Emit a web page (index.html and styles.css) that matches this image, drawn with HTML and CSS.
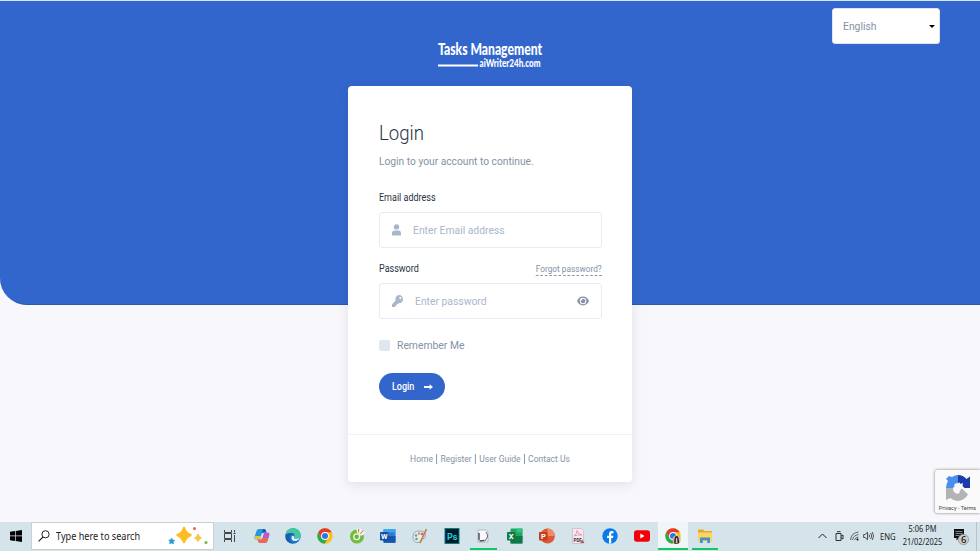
FILE: index.html
```
<!DOCTYPE html>
<html lang="en">
<head>
    <meta charset="UTF-8">
    <title>Login</title>
    <link rel="stylesheet" href="styles.css">
</head>
<body>
<div class="page">
    <div class="banner"></div>
    <div class="lang"><span>English</span><i class="caret"></i></div>
    <div class="main">
        <svg class="logo" width="120" height="38" viewBox="-5 -4 120 38">
            <text x="3" y="15" class="logo-big" textLength="104" lengthAdjust="spacingAndGlyphs">Tasks Management</text>
            <rect x="3" y="24.5" width="40" height="2" fill="#fff"/>
            <text x="44.500" y="26.500" class="logo-small" textLength="61" lengthAdjust="spacingAndGlyphs">aiWriter24h.com</text>
        </svg>
        <div class="card">
            <form class="card-body">
                <h1>Login</h1>
                <p class="intro">Login to your account to continue.</p>
                <div class="label-row"><label>Email address</label></div>
                <div class="field">
                    <svg class="icon-user" width="9" height="12" viewBox="0 0 9 12"><circle cx="4.500" cy="2.900" r="2.700"/><path d="M0 10.700V9.400Q0 6.500 2.600 6.500h3.800Q9 6.500 9 9.400v1.300q0 .9-.9.900H.9Q0 11.600 0 10.700z"/></svg>
                    <span>Enter Email address</span>
                </div>
                <div class="label-row second"><label>Password</label><a class="forgot">Forgot password?</a></div>
                <div class="field">
                    <svg class="icon-key" width="11" height="12" viewBox="0 0 512 512" preserveAspectRatio="none"><path d="M512 176c0 97-79 176-176 176-11 0-22-1-33-3l-24 27c-5 5-11 8-18 8h-37v40c0 13-11 24-24 24h-40v40c0 13-11 24-24 24H24c-13 0-24-11-24-24v-78c0-6 3-12 7-17l162-162C163 214 160 195 160 176 160 79 239 0 336 0s176 79 176 176zM336 128a48 48 0 1 0 96 0 48 48 0 1 0-96 0z"/></svg>
                    <span>Enter password</span>
                    <svg class="icon-eye" width="12" height="10" viewBox="0 0 12 10"><path fill-rule="evenodd" d="M0 5Q2 .6 6 .6T12 5Q10 9.400 6 9.400T0 5zM6 1.700a3.300 3.300 0 1 0 0 6.600 3.300 3.300 0 0 0 0-6.600zM6 2.700a2.300 2.300 0 1 1-2.200 1.600 1.150 1.150 0 0 0 1.500-1.500Q5.600 2.700 6 2.700z"/></svg>
                </div>
                <div class="remember"><i class="box"></i><span>Remember Me</span></div>
                <a class="btn"><span>Login</span><svg width="9" height="6" viewBox="0 0 9 6"><path d="M0 2.100h5.600V.2L9 3 5.600 5.800V3.900H0z" fill="#fff"/></svg></a>
            </form>
            <div class="card-footer">
                <a>Home</a><i></i><a>Register</a><i></i><a>User Guide</a><i></i><a>Contact Us</a>
            </div>
        </div>
    </div>
    <div class="captcha">
        <svg width="26" height="28" viewBox="0 0 26 28">
            <path d="M1 14q0-4 2-7L1 5l3-3 3 1q3-2 6-2v8q-3 0-4 2l2 3z" fill="#4a8ef0"/>
            <path d="M13 1q5 0 8.500 4L25 2.500V14H14l2.500-2.500L13 9z" fill="#1c3aa9"/>
            <path d="M1 14h7q0 4 3 5.500 3 1 4-1.500l-2-2 4-1.500 6 6Q19 27 12.500 27q-4 0-7-3L1 26z" fill="#b3b3b3"/>
            <path d="M8 13l3-1-1-2 3 .5L14 8l1.500 2 2.500-1-.5 3 2 2-3.500.5-1 3-2-1-2 2-1-3z" fill="#fafafa"/>
        </svg>
        <span>Privacy - Terms</span>
    </div>
</div>
<div class="taskbar">
    <div class="start">
        <svg width="12" height="12" viewBox="0 0 12 12"><path d="M0 1.700L5 1v4.600H0zM5.700.9L12 0v5.600H5.700zM0 6.300h5V11l-5-.7zM5.700 6.300H12V12l-6.300-.9z"/></svg>
    </div>
    <div class="search">
        <svg class="glass" width="12" height="12" viewBox="0 0 12 12"><circle cx="7.500" cy="4.300" r="3.600" fill="none" stroke="#222"/><path d="M5 7L.6 11.400" stroke="#222" stroke-width="1.100"/></svg>
        <span>Type here to search</span>
        <svg class="sparkle" width="42" height="20" viewBox="0 0 42 20">
            <path d="M16 2q1.500 5.500 6.500 7-5 2-6.500 7Q14.500 11 9.500 9 14.500 7.500 16 2z" fill="#fbbd22" stroke="#fbbd22" stroke-width="2.500" stroke-linejoin="round"/>
            <path d="M30 8q1 3 3.500 4-2.500 1-3.500 3.500-1-2.500-3.500-3.500Q29 11 30 8z" fill="#f9c545" stroke="#f9c545"/>
            <path d="M3.700 12l1 2 2.200.5-1.700 1.300.2 2.200-1.900-1-2 .8.500-2.200L.8 14l2.100-.2z" fill="#239be0" stroke="#239be0" stroke-width=".6"/>
            <circle cx="26.500" cy="2.600" r="1.500" fill="#e76a3d"/><circle cx="38" cy="16.500" r="1.500" fill="#77b843"/>
        </svg>
    </div>
    <div class="apps">
        <div class="app"><svg width="16" height="16" viewBox="0 0 16 16"><path d="M2.500 2v2.500h7V2M2.500 14v-2.500h7V14M2.500 5.500h7v5h-7zM12.500 2v2.500M12.500 7v7M11.500 5.500h2" fill="none" stroke="#444"/></svg></div>
        <div class="app"><svg width="16" height="16" viewBox="0 0 16 16">
            <path d="M5 1h5q1.500 0 2 2l.5 1.500H9.500Q8 4.500 7.500 6L6 11.500H2Q0 11.500.7 8.500L2.500 3Q3 1 5 1z" fill="#249ad8"/>
            <path d="M9 1h1q1.500 0 2 2l.5 1.500H9.500L8 5z" fill="#1f4fbb"/>
            <path d="M1 8h6l-1 3.500H2.500Q.2 11.500 1 8z" fill="#e3c52d"/>
            <path d="M11 15H6q-1.500 0-2-2l-.5-1.500h3Q8 11.500 8.500 10L10 4.500h4q2 0 1.300 3L13.500 13Q13 15 11 15z" fill="#b45bd2"/>
            <path d="M4 12h3l1.500-2h5.800l-1 3q-.6 2-2.300 2H6q-1.500 0-2-3z" fill="#ef6752"/></svg></div>
        <div class="app"><svg width="16" height="16" viewBox="0 0 16 16">
            <circle cx="8" cy="8" r="7.700" fill="#1679cf"/>
            <path d="M.4 7Q1.300.3 8 .3q7 0 7.700 6.500 0 4-4.200 4-3 0-2.300-2Q10.500 5.500 7 5 3 4.500.4 7z" fill="#43c8a0"/>
            <path d="M.4 7Q3 4.400 7 5q2 .4 2.500 2-4-2-5 2-.5 4.500 4 6.600Q0 15.500.4 7z" fill="#1b5cad"/>
            <path d="M9 8.500q-.8 2.300 2.500 2.300 2 0 3.500-1-1 2.400-3.500 3Q6 13.500 6.600 9 7 7 9 8.500z" fill="#e9f3f7"/></svg></div>
        <div class="app"><svg width="16" height="16" viewBox="0 0 16 16">
            <circle cx="8" cy="8" r="7.700" fill="#fbc116"/><path d="M1.300 4.200A7.700 7.700 0 0 1 14.700 4.200H8L4.700 10z" fill="#e33b2e"/><path d="M1.300 4.200a7.700 7.700 0 0 0 6 11.500L11.300 10H4.700z" fill="#2da94f"/><circle cx="8" cy="8" r="3.900" fill="#fff"/><circle cx="8" cy="8" r="3" fill="#2c76e5"/></svg></div>
        <div class="app"><svg width="16" height="16" viewBox="0 0 16 16">
            <path d="M8 1.500a7 7 0 1 0 6.800 5.500L11 7.500 8.500 5z" fill="#72bd3c"/><circle cx="7.700" cy="8.700" r="3.500" fill="#eef8e9"/><circle cx="7.700" cy="8.700" r="2.200" fill="#65b735"/><path d="M9 5L8.500.5M10.500 5.500L12 1M11.500 7L15 4" stroke="#f7f7ee" stroke-width="2"/><path d="M9.600 4.500V1M11.300 6L14 2.500" stroke="#dd6b55"/></svg></div>
        <div class="app"><svg width="16" height="16" viewBox="0 0 16 16">
            <rect x="3.500" y="1" width="12" height="14" rx="1" fill="#2b7cd3"/><path d="M3.500 1h12v3.500h-12z" fill="#41a5ee"/><path d="M3.500 8h12v6.500h-12z" fill="#1853ac"/><rect x="0" y="4" width="8.500" height="8.500" rx=".8" fill="#1650a4"/><text x="1" y="11" font-size="7.500" class="app-letter">W</text></svg></div>
        <div class="app"><svg width="16" height="16" viewBox="0 0 16 16">
            <path d="M1 9Q1 3 7 3q6.500 0 6.500 4.500 0 3-3 3.500-1 .3-1.500 2-.5 1.500-3 1.500-5 0-5-5.500z" fill="#e9eaec" stroke="#94a9b7"/><circle cx="4" cy="7.500" r="1.300" fill="#51a4d4"/><circle cx="7" cy="5.500" r="1.300" fill="#e39145"/><circle cx="10" cy="6" r="1.200" fill="#ca5c61"/><circle cx="4.500" cy="11" r="1.300" fill="#68a861"/><path d="M14.500 1L8 15" stroke="#b98248" stroke-width="1.700"/></svg></div>
        <div class="app"><svg width="16" height="16" viewBox="0 0 16 16"><rect x="1" y=".5" width="14" height="15" fill="#001d26" stroke="#087b8d"/><text x="3" y="11.500" font-size="9" class="app-letter ps">Ps</text></svg></div>
        <div class="app open"><svg width="16" height="16" viewBox="0 0 16 16"><path d="M3 2h8l2 2v10H3z" fill="#f9f9fb" stroke="#b5b8c5"/><path d="M4 5v7M4.500 13l5-.5" stroke="#4a5068" stroke-width="1.500"/><path d="M11 4q2 3 1.500 5L10 13" fill="none" stroke="#745d94"/></svg></div>
        <div class="app"><svg width="16" height="16" viewBox="0 0 16 16">
            <rect x="3.500" y="0.500" width="12" height="15" rx="1" fill="#21a366"/><path d="M9.500.5h6v4h-6z" fill="#33c481"/><path d="M3.500 8h12v7.500h-12z" fill="#12774a"/><rect x="0" y="4" width="8.500" height="8.500" rx=".8" fill="#107c41"/><text x="1.800" y="11" font-size="7.500" class="app-letter">X</text></svg></div>
        <div class="app"><svg width="16" height="16" viewBox="0 0 16 16">
            <circle cx="8.500" cy="8" r="7.400" fill="#dc5936"/><path d="M8.500.6A7.400 7.400 0 0 1 15.900 8H8.500z" fill="#f18a68"/><rect x="0" y="4" width="8.500" height="8.500" rx=".8" fill="#c43e1c"/><text x="2" y="11" font-size="7.500" class="app-letter">P</text></svg></div>
        <div class="app"><svg width="16" height="16" viewBox="0 0 16 16">
            <path d="M2.500.5h9l2 2v13h-11z" fill="#f8e9f0" stroke="#d5bfd2"/><path d="M4 8Q7 6 7 2.500 8 6 12 7 7 6.500 4 8z" fill="none" stroke="#dc86a3" stroke-width=".8"/><text x="3.500" y="14" font-size="4.500" class="pdf">PDF</text><path d="M10 15l2.200-3.500 2.300 3.500z" fill="#986b5f"/></svg></div>
        <div class="app"><svg width="16" height="16" viewBox="0 0 16 16"><circle cx="8" cy="8" r="7.700" fill="#087bea"/><path d="M7 15.600V10H5V7.700h2V6q0-3 2.900-3l1.600.2v2h-1.100q-1.200 0-1.200 1.200v1.300h2.200L11 10H9.200v5.600z" fill="#fff"/></svg></div>
        <div class="app"><svg width="16" height="16" viewBox="0 0 16 16"><rect x="0" y="2.200" width="16" height="11.600" rx="2.800" fill="#f40009"/><path d="M6.400 5.600v4.800L10.500 8z" fill="#fff"/></svg></div>
        <div class="app open active"><svg width="16" height="16" viewBox="0 0 16 16">
            <circle cx="8" cy="8" r="7.700" fill="#fbc116"/><path d="M1.300 4.200A7.700 7.700 0 0 1 14.700 4.200H8L4.700 10z" fill="#e33b2e"/><path d="M1.300 4.200a7.700 7.700 0 0 0 6 11.500L11.300 10H4.700z" fill="#2da94f"/><circle cx="8" cy="8" r="3.900" fill="#fff"/><circle cx="8" cy="8" r="3" fill="#2c76e5"/><circle cx="11.500" cy="11.800" r="4.200" fill="#c9b9a7"/><path d="M9 15.200l.6-5.200Q10 8 11.500 8q1.700 0 2 2l.8 5q-2.500 1.500-5.300.2z" fill="#2b2727"/><path d="M11 10h1.200l.3 5h-1.800z" fill="#d9c0ad"/></svg></div>
        <div class="app open"><svg width="16" height="16" viewBox="0 0 16 16"><path d="M1 1.500h5L7.500 3H15v10H1z" fill="#e6a92d"/><path d="M1 4.500h14v9H1z" fill="#fbd55f"/><path d="M3 15V9.500h10V15h-2.700v-2.700H5.700V15z" fill="#3f91c9"/></svg></div>
    </div>
    <div class="tray">
        <svg width="9" height="6" viewBox="0 0 9 6"><path d="M.5 5L4.500 1l4 4" fill="none" stroke="#222"/></svg>
        <svg class="t-meet" width="9" height="11" viewBox="0 0 9 11"><path d="M1 2.500h5v7H1zM2 .7h3.500M6 5l2-1v4L6 7" fill="none" stroke="#333"/></svg>
        <svg class="t-net" width="9" height="10" viewBox="0 0 9 10"><path d="M.5 9Q1 2 8.500 1M2.500 9Q3 4.500 8.500 3.500M4.500 9Q5 6.500 8.500 6" fill="none" stroke="#555" stroke-width=".9"/><circle cx="7.500" cy="8.500" r="1"/></svg>
        <svg class="t-vol" width="11" height="10" viewBox="0 0 11 10"><path d="M.6 3.500h1.800L4.500 1v8L2.400 6.500H.6zM6 3.500q1 1.500 0 3M7.700 2q2 3 0 6M9.300 1q2.500 4 0 8" fill="none" stroke="#444" stroke-width=".9"/></svg>
        <span class="t-lang">ENG</span>
    </div>
    <div class="clock"><span>5:06 PM</span><span>21/02/2025</span></div>
    <div class="notify">
        <svg width="17" height="18" viewBox="0 0 17 18"><path d="M1 1h10v9H6l-2.500 2.500V10H1z" fill="#111"/><path d="M2.500 3.500h7M2.500 5.500h7M2.500 7.500h4" stroke="#aebac1" stroke-width=".7"/><circle cx="10.500" cy="11.500" r="5.200" fill="#c9cbcc" stroke="#8b9195" stroke-width=".7"/><text x="8" y="15" font-size="9.500" class="count">6</text></svg>
    </div>
</div>
</body>
</html>
```
FILE: styles.css
```
*{
    margin: 0;
    padding: 0;
    box-sizing: border-box;
}
body{
    width: 980px;
    height: 551px;
    overflow: hidden;
    font-family: Roboto, "Liberation Sans", sans-serif;
    white-space: nowrap;
    background: #f7f7fc;
}
svg{
    display: block;
    flex: none;
}
/* narrow text */
h1, .intro, label, .lang span, .field span, .remember span, .btn span, .search span, .t-lang{
    transform: scaleX(.9);
    transform-origin: left center;
}
.page{
    height: 522px;
    position: relative;
    border-top: 1px solid #d4eafb;
}
.banner{
    position: absolute;
    left: 0;
    right: 0;
    top: 0;
    height: 304px;
    background: #3366cc;
    border-bottom: 1px solid #2b57b5;
    border-bottom-left-radius: 27px;
}
.lang{
    position: absolute;
    left: 832px;
    top: 7px;
    width: 108px;
    height: 36px;
    padding: 0 4px 0 10px;
    display: flex;
    align-items: center;
    justify-content: space-between;
    background: #fff;
    border: 1px solid #dfe5f0;
    border-radius: 3px;
    font-size: 11.500px;
    color: #8492a6;
}
.caret{
    border: 3px solid transparent;
    border-top: 3px solid #000;
    border-bottom: 0;
}
.main{
    position: relative;
    display: flex;
    flex-direction: column;
    align-items: center;
    padding-top: 35px;
}
.logo{
    margin-bottom: 12px;
}
.logo text{
    fill: #fff;
    font-family: Lato, sans-serif;
    font-weight: 900;
}
.logo-big{
    font-size: 16px;
}
.logo-small{
    font-size: 10.500px;
}
.card{
    width: 284px;
    height: 396px;
    background: #fff;
    border-radius: 4px;
    box-shadow: 0 3px 12px rgba(31, 45, 61, .1);
}
.card-body{
    height: 349px;
    padding: 35px 30.500px 0;
    border-bottom: 1px solid #eef1f5;
}
h1{
    font-size: 20px;
    font-weight: 300;
    line-height: 24px;
    transform: scaleX(.93);
    color: #273444;
}
.intro{
    margin-top: 7px;
    font-size: 11.500px;
    line-height: 18px;
    transform: scaleX(.89);
    color: #8492a6;
}
.label-row{
    display: flex;
    justify-content: space-between;
    align-items: center;
    height: 16px;
    margin-top: 19px;
    margin-bottom: 7px;
    font-size: 10px;
    color: #273444;
}
.second{
    margin-top: 12px;
}
.forgot{
    margin-top: 3px;
    font-size: 9px;
    line-height: 12px;
    transform: scaleX(.92);
    transform-origin: right center;
    color: #8492a6;
    border-bottom: 1px dashed #8492a6;
}
.field{
    width: 223px;
    height: 36px;
    display: flex;
    align-items: center;
    padding: 0 12px;
    border: 1px solid #e8ebf1;
    border-radius: 3px;
    font-size: 11.500px;
    color: #a9b7cb;
    fill: #a9b7cb;
}
.field span{
    margin-left: 12.500px;
    flex: 1;
}
.icon-eye{
    fill: #8492a6;
}
.remember{
    display: flex;
    align-items: center;
    height: 18px;
    margin-top: 17px;
    font-size: 11.500px;
    color: #8492a6;
}
.box{
    width: 11px;
    height: 11px;
    margin-right: 7px;
    border-radius: 2px;
    background: #e0e6ef;
}
.btn{
    width: 66px;
    height: 27px;
    margin-top: 19px;
    padding: 0 12px 0 13px;
    display: flex;
    align-items: center;
    justify-content: space-between;
    border-radius: 14px;
    background: #3366cc;
    color: #fff;
    font-size: 10px;
    font-weight: 500;
}
.card-footer{
    height: 47px;
    padding-top: 1px;
    display: flex;
    align-items: center;
    justify-content: center;
    font-size: 9px;
    transform: scaleX(.945);
    color: #8492a6;
}
.card-footer i{
    width: 1px;
    height: 10px;
    margin: 0 3.500px;
    background: #8492a6;
}
.captcha{
    position: absolute;
    right: 0;
    bottom: 9px;
    width: 45px;
    height: 43px;
    overflow: hidden;
    display: flex;
    flex-direction: column;
    align-items: center;
    justify-content: space-between;
    padding: 4px 0 2px;
    background: #fafafa;
    border-radius: 2px 0 0 2px;
    box-shadow: 0 0 3px #777;
    font-size: 5.500px;
    color: #444;
}
.taskbar{
    height: 29px;
    display: flex;
    background: #d4e4ea;
    font-family: "Noto Sans", sans-serif;
    color: #222;
}
.start{
    width: 31px;
    height: 28px;
    display: flex;
    align-items: center;
    justify-content: center;
}
.search{
    width: 183px;
    height: 28px;
    display: flex;
    align-items: center;
    padding: 0 3px 0 6px;
    background: #fff;
    border: 1px solid #c8d0d4;
    font-size: 10px;
}
.search span{
    margin-left: 6px;
    flex: 1;
    transform: scaleX(.913);
}
.apps{
    display: flex;
    width: 507px;
    height: 28px;
}
.app{
    width: 31.680px;
    flex: none;
    display: flex;
    align-items: center;
    justify-content: center;
    border-bottom: 2px solid transparent;
    padding-top: 2px;
}
.open{
    width: 26.680px;
    border-bottom-color: #10c765;
    margin: 0 2.500px;
}
.active{
    width: 29.680px;
    background: #f0f6f8;
    margin: 0 1px;
}
.app-letter{
    fill: #fff;
    font-family: Roboto, sans-serif;
    font-weight: 700;
}
.ps{
    fill: #29c7e7;
}
.pdf{
    fill: #333;
    font-family: Roboto, sans-serif;
    font-weight: 700;
}
.tray{
    margin-left: 97px;
    width: 78px;
    height: 28px;
    display: flex;
    align-items: center;
}
.t-meet{
    margin-left: 8px;
}
.t-net{
    margin-left: 6px;
}
.t-vol{
    margin-left: 4px;
}
.t-lang{
    margin-left: 6px;
    font-size: 8.500px;
}
.clock{
    width: 53px;
    display: flex;
    flex-direction: column;
    align-items: center;
    font-size: 8.500px;
    line-height: 13px;
    transform: scaleX(.87);
}
.notify{
    margin-left: 4px;
    width: 24px;
    padding-top: 6px;
    border-right: 1px solid #b5c3c9;
}
.count{
    font-family: "Noto Sans", sans-serif;
}
```
